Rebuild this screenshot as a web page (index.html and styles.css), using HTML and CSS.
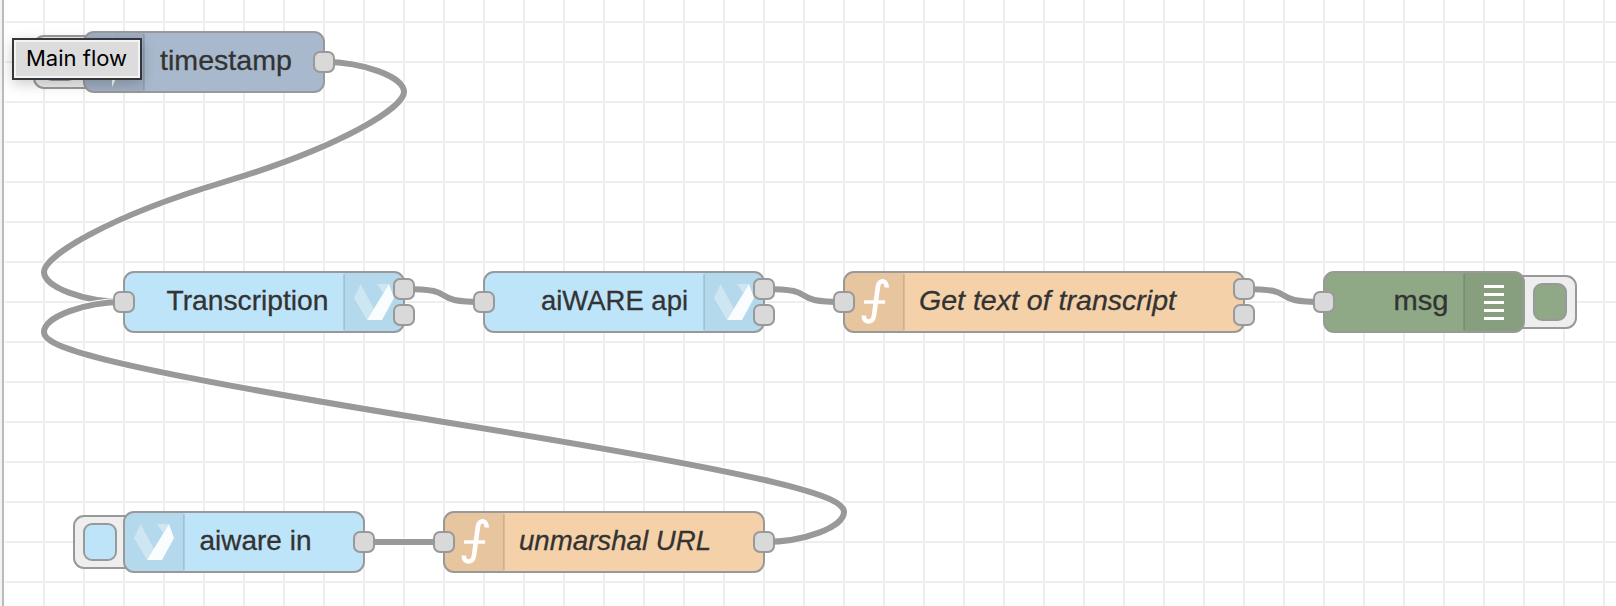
FILE: index.html
```html
<!DOCTYPE html>
<html lang="en">
<head>
<meta charset="utf-8">
<title>Flow editor</title>
<link rel="stylesheet" href="styles.css">
</head>
<body>
<main class="workspace">
<svg class="canvas" width="1616" height="606" viewBox="0 0 1616 606">
  <defs>
    <pattern id="grid" x="43" y="21" width="40" height="40" patternUnits="userSpaceOnUse">
      <path class="grid-line" d="M1 0V40M0 1H40"/>
    </pattern>
    <rect id="port" class="port" x="-10" y="-10" width="20" height="20" rx="6"/>
    <g id="icon-v">
      <path fill="#fff" opacity=".35" d="M16.500 13L10 27 23 49 30 38Z"/>
      <path fill="#fff" opacity=".35" d="M33 13H45L39 22Z"/>
      <path fill="#fff" opacity=".93" d="M45 13L50 27 38 49H23Z"/>
    </g>
    <g id="icon-f">
      <path class="f-stem" d="M42.500 16.500C43 9 35.500 8 34 15L30 44.500C29 52.500 19.500 52.500 19.800 44.500"/>
      <path class="f-bar" d="M20 31H41"/>
    </g>
  </defs>
  <rect x="5" width="1611" height="606" fill="url(#grid)"/>

  <g class="wires">
    <path class="halo" d="M324 62C364 62 404 77 404 92S344 146 224 182S44 257 44 272S84 302 124 302"/>
    <path class="wire" d="M324 62C364 62 404 77 404 92S344 146 224 182S44 257 44 272S84 302 124 302"/>
    <path class="halo" d="M764 542C804 542 844 527 844 512S792 478 444 422S44 347 44 332S84 302 124 302"/>
    <path class="wire" d="M764 542C804 542 844 527 844 512S792 478 444 422S44 347 44 332S84 302 124 302"/>
    <path class="halo" d="M404 289C464.800 289 423.200 302 484 302M764 289C824.800 289 783.200 302 844 302M1244 289C1304.800 289 1263.200 302 1324 302M364 542H444"/>
    <path class="wire" d="M404 289C464.800 289 423.200 302 484 302M764 289C824.800 289 783.200 302 844 302M1244 289C1304.800 289 1263.200 302 1324 302M364 542H444"/>
  </g>

  <g>
    <rect class="button" x="34" y="36" width="64" height="52" rx="10"/>
    <rect class="box inject" x="44" y="44" width="32" height="36" rx="8"/>
    <rect class="box inject" x="84" y="32" width="240" height="60" rx="10"/>
    <path class="shade" d="M94 33H144V91H94A9 9 0 0 1 85 82V42A9 9 0 0 1 94 33Z"/>
    <path class="divider" d="M144 34V90"/>
    <path fill="#fff" opacity=".9" d="M112 37L124 62 112 87Z"/>
    <text class="label" x="160" y="70" textLength="132" lengthAdjust="spacingAndGlyphs">timestamp</text>
    <use href="#port" x="324" y="62"/>
  </g>

  <g>
    <rect class="box aiware" x="124" y="272" width="280" height="60" rx="10"/>
    <path class="shade" d="M344 273H394A9 9 0 0 1 403 282V322A9 9 0 0 1 394 331H344Z"/>
    <path class="divider" d="M344 274V330"/>
    <use href="#icon-v" x="344" y="271"/>
    <text class="label" x="166.500" y="310" textLength="162" lengthAdjust="spacingAndGlyphs">Transcription</text>
    <use href="#port" x="124" y="302"/>
    <use href="#port" x="404" y="289"/>
    <use href="#port" x="404" y="315"/>
  </g>

  <g>
    <rect class="box aiware" x="484" y="272" width="280" height="60" rx="10"/>
    <path class="shade" d="M704 273H754A9 9 0 0 1 763 282V322A9 9 0 0 1 754 331H704Z"/>
    <path class="divider" d="M704 274V330"/>
    <use href="#icon-v" x="704" y="271"/>
    <text class="label" x="541" y="310" textLength="147" lengthAdjust="spacingAndGlyphs">aiWARE api</text>
    <use href="#port" x="484" y="302"/>
    <use href="#port" x="764" y="289"/>
    <use href="#port" x="764" y="315"/>
  </g>

  <g>
    <rect class="box function" x="844" y="272" width="400" height="60" rx="10"/>
    <path class="shade" d="M854 273H904V331H854A9 9 0 0 1 845 322V282A9 9 0 0 1 854 273Z"/>
    <path class="divider" d="M904 274V330"/>
    <use href="#icon-f" x="844" y="271"/>
    <text class="label named" x="919" y="310" textLength="257" lengthAdjust="spacingAndGlyphs">Get text of transcript</text>
    <use href="#port" x="844" y="302"/>
    <use href="#port" x="1244" y="289"/>
    <use href="#port" x="1244" y="315"/>
  </g>

  <g>
    <rect class="button" x="1512" y="276" width="64" height="52" rx="10"/>
    <rect class="box debug" x="1534" y="284" width="32" height="36" rx="8"/>
    <rect class="box debug" x="1324" y="272" width="200" height="60" rx="10"/>
    <path class="shade" d="M1464 273H1514A9 9 0 0 1 1523 282V322A9 9 0 0 1 1514 331H1464Z"/>
    <path class="divider" d="M1464 274V330"/>
    <path fill="#fff" d="M1484 285h20v3h-20zM1484 293h20v3h-20zM1484 301h20v3h-20zM1484 309h20v3h-20zM1484 317h20v3h-20z"/>
    <text class="label" x="1393.500" y="310" textLength="55" lengthAdjust="spacingAndGlyphs">msg</text>
    <use href="#port" x="1324" y="302"/>
  </g>

  <g>
    <rect class="button" x="74" y="516" width="64" height="52" rx="10"/>
    <rect class="box aiware" x="84" y="524" width="32" height="36" rx="8"/>
    <rect class="box aiware" x="124" y="512" width="240" height="60" rx="10"/>
    <path class="shade" d="M134 513H184V571H134A9 9 0 0 1 125 562V522A9 9 0 0 1 134 513Z"/>
    <path class="divider" d="M184 514V570"/>
    <use href="#icon-v" x="124" y="511"/>
    <text class="label" x="199.500" y="550" textLength="112" lengthAdjust="spacingAndGlyphs">aiware in</text>
    <use href="#port" x="364" y="542"/>
  </g>

  <g>
    <rect class="box function" x="444" y="512" width="320" height="60" rx="10"/>
    <path class="shade" d="M454 513H504V571H454A9 9 0 0 1 445 562V522A9 9 0 0 1 454 513Z"/>
    <path class="divider" d="M504 514V570"/>
    <use href="#icon-f" x="444" y="511"/>
    <text class="label named" x="519" y="550" textLength="192" lengthAdjust="spacingAndGlyphs">unmarshal URL</text>
    <use href="#port" x="444" y="542"/>
    <use href="#port" x="764" y="542"/>
  </g>
</svg>
<div class="tooltip">Main flow</div>
</main>
</body>
</html>
```
FILE: styles.css
```css
body { margin: 0; background: #fff; overflow: hidden; }
.workspace { position: relative; box-sizing: border-box; width: 1616px; height: 606px; }
.workspace::before { content: ""; position: absolute; left: 0; top: 0; width: 2px; height: 606px; background: #f3f3f3; border-right: 2px solid #bbb; }
.canvas { display: block; }
.grid-line { fill: none; stroke: #eee; stroke-width: 2; }
.halo { fill: none; stroke: #fff; stroke-width: 8; }
.wire { fill: none; stroke: #999; stroke-width: 6; }
.box, .port, .button { stroke: #999; stroke-width: 2; }
.port { fill: #d9d9d9; }
.button { fill: #eee; }
.inject { fill: #a9b9cd; }
.aiware { fill: #bee4f9; }
.function { fill: #f4d1a8; }
.debug { fill: #8fa885; }
.shade { fill: #000; fill-opacity: .05; }
.divider { fill: none; stroke: #000; stroke-opacity: .1; stroke-width: 2; }
.f-stem { fill: none; stroke: #fff; stroke-width: 4.6; }
.f-bar { fill: none; stroke: #fff; stroke-width: 3.4; }
.label { font: 28.5px "Liberation Sans", Arial, sans-serif; fill: #333; stroke: #333; stroke-width: .3px; }
.named { font-style: italic; }
.tooltip { position: absolute; left: 12px; top: 38px; box-sizing: border-box; width: 130px; height: 42px; padding-left: 12px; border: 2px solid #33363a; box-shadow: inset 0 0 0 2px #f4f4f4, 0 4px 14px rgba(0,0,0,.2); background: #dcdcdc; color: #000; font: 22px/36px Inter, sans-serif; white-space: nowrap; }
```
